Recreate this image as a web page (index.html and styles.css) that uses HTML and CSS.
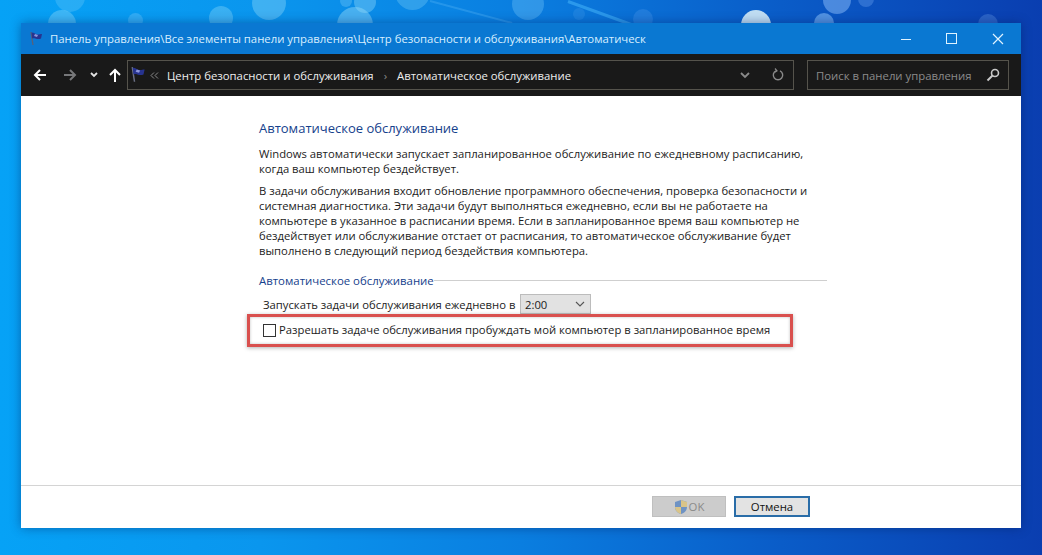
FILE: index.html
```html
<!DOCTYPE html>
<html lang="ru">
<head>
<meta charset="utf-8">
<title>Автоматическое обслуживание</title>
<link rel="stylesheet" href="styles.css">
</head>
<body>
<div class="desktop">
  <span class="bokeh b1"></span><span class="bokeh b2"></span><span class="bokeh b3"></span><span class="bokeh b4"></span><span class="bokeh b5"></span><span class="bokeh b6"></span><span class="bokeh b7"></span><span class="bokeh b8"></span><span class="bokeh b9"></span><span class="bokeh b10"></span><span class="bokeh b11"></span><span class="bokeh b12"></span><span class="bokeh b13"></span><span class="bokeh b14"></span><span class="bokeh b15"></span><span class="bokeh b16"></span><span class="bokeh b17"></span>
  <span class="streak s1"></span><span class="streak s2"></span>
  <main class="window">
    <header class="titlebar">
      <svg class="flag-small" width="16" height="16" viewBox="0 0 16 16"><path d="M2 1l2 13" stroke="#5a6078" stroke-width="1.300"/><path d="M2.500 1.500c3 0 4 2 6 2s3-.5 4.500-.5l-1 4.500c-2 1-4 .5-5.500 0s-2.500-.5-3.500 0z" fill="#27338f"/><path d="M6 3l3 1-1 2-3-1z" fill="#8d96dc"/></svg>
      <span class="title-text">Панель управления\Все элементы панели управления\Центр безопасности и обслуживания\Автоматическ</span>
      <div class="winctrls">
        <svg width="12" height="12" viewBox="0 0 12 12"><path d="M1 6.500h10" stroke="#dff3ff" stroke-width="1"/></svg>
        <svg width="12" height="12" viewBox="0 0 12 12"><rect x=".5" y=".5" width="10" height="10" fill="none" stroke="#dff3ff"/></svg>
        <svg width="12" height="12" viewBox="0 0 12 12"><path d="M1 1l10 10M11 1L1 11" stroke="#dff3ff" stroke-width="1.200"/></svg>
      </div>
    </header>
    <nav class="toolbar">
      <svg class="nav back" width="14" height="14" viewBox="0 0 14 14"><path d="M13 7H2M7 2L2 7l5 5" fill="none" stroke="#fff" stroke-width="2"/></svg>
      <svg class="nav fwd" width="14" height="14" viewBox="0 0 14 14"><path d="M1 7h11M7 2l5 5-5 5" fill="none" stroke="#77787a" stroke-width="2"/></svg>
      <svg class="nav down" width="8" height="6" viewBox="0 0 8 6"><path d="M1 1l3 3 3-3" fill="none" stroke="#e4e4e4" stroke-width="1.800"/></svg>
      <svg class="nav up" width="14" height="14" viewBox="0 0 14 14"><path d="M7 14V2M2 7l5-5 5 5" fill="none" stroke="#fff" stroke-width="2"/></svg>
      <div class="address">
        <svg class="flag-big" width="18" height="18" viewBox="0 0 16 16"><path d="M2 1l2 13" stroke="#6b7085" stroke-width="1.300"/><path d="M2.500 1.500c3 0 4 2 6 2s3-.5 4.500-.5l-1 4.500c-2 1-4 .5-5.500 0s-2.500-.5-3.500 0z" fill="#27338f"/><path d="M6 3l3 1-1 2-3-1z" fill="#8d96dc"/></svg>
        <svg class="chev" width="9" height="7" viewBox="0 0 9 7"><path d="M4 .5L1 3.500l3 3M8 .5L5 3.500l3 3" fill="none" stroke="#8a8a8a" stroke-width="1"/></svg>
        <span class="crumb">Центр безопасности и обслуживания</span>
        <span class="sep">›</span>
        <span class="crumb">Автоматическое обслуживание</span>
        <svg class="addr-drop" width="10" height="7" viewBox="0 0 10 7"><path d="M1 1l4 4 4-4" fill="none" stroke="#8a8a8a" stroke-width="1.800"/></svg>
        <svg class="refresh" width="12" height="14" viewBox="0 0 12 14"><path d="M4 2.800a4.700 4.700 0 1 0 4 0" fill="none" stroke="#8a8a8a" stroke-width="1.400"/><path d="M3 .5l2 2.300-2.300 1.500" fill="none" stroke="#8a8a8a" stroke-width="1.200"/></svg>
      </div>
      <div class="search">
        <span class="search-text">Поиск в панели управления</span>
        <svg width="14" height="14" viewBox="0 0 14 14"><circle cx="9" cy="5" r="3.500" fill="none" stroke="#c9c9c9" stroke-width="1.600"/><path d="M6.500 7.500L1.500 12.500" stroke="#c9c9c9" stroke-width="2"/></svg>
      </div>
    </nav>
    <section class="content">
      <h1 class="heading">Автоматическое обслуживание</h1>
      <p class="para p1">Windows автоматически запускает запланированное обслуживание по ежедневному расписанию,<br>когда ваш компьютер бездействует.</p>
      <p class="para p2">В задачи обслуживания входит обновление программного обеспечения, проверка безопасности и<br>системная диагностика. Эти задачи будут выполняться ежедневно, если вы не работаете на<br>компьютере в указанное в расписании время. Если в запланированное время ваш компьютер не<br>бездействует или обслуживание отстает от расписания, то автоматическое обслуживание будет<br>выполнено в следующий период бездействия компьютера.</p>
      <div class="group-head"><span class="group-title">Автоматическое обслуживание</span><span class="group-line"></span></div>
      <div class="time-row"><span class="time-label">Запускать задачи обслуживания ежедневно в</span>
        <div class="select"><span>2:00</span><svg width="10" height="6" viewBox="0 0 10 6"><path d="M1 1l4 4 4-4" fill="none" stroke="#555" stroke-width="1.100"/></svg></div>
      </div>
      <div class="check-row"><span class="checkbox"></span><span class="check-label">Разрешать задаче обслуживания пробуждать мой компьютер в запланированное время</span></div>
    </section>
    <footer class="footer">
      <button class="btn ok" disabled>
        <svg width="14" height="16" viewBox="0 0 14 16"><path d="M7 1l6 2v5c0 4-3 6-6 7-3-1-6-3-6-7V3z" fill="#6f93c4"/><path d="M7 1l6 2v5H7zM7 8H1c0 4 3 6 6 7z" fill="#d9c489"/></svg>
        <span>OK</span>
      </button>
      <button class="btn cancel">Отмена</button>
    </footer>
  </main>
</div>
</body>
</html>
```
FILE: styles.css
```css
* { box-sizing: border-box; }
html, body { margin: 0; padding: 0; }
body { font-family: "Open Sans", "Noto Sans", sans-serif; }
.desktop {
  position: relative;
  width: 1042px;
  height: 555px;
  padding: 23px 21px 27px;
  overflow: hidden;
  background: linear-gradient(90deg, #06a2f6 0%, #0a96ee 25%, #0a7ee0 50%, #0a5cc8 75%, #0a3eb0 100%);
}
.bokeh { position: absolute; border-radius: 50%; background: rgba(150, 215, 255, .3); filter: blur(.6px); }
.streak { position: absolute; height: 2px; background: rgba(70, 180, 250, .55); transform-origin: left center; }
.s1 { left: 430px; top: 0; width: 85px; transform: rotate(15deg); background: rgba(100, 190, 250, .3); }
.s2 { left: 568px; top: 0; width: 68px; height: 3px; transform: rotate(20deg); }
.b1 { left: 55px; top: -18px; width: 30px; height: 30px; background: rgba(120, 205, 250, .3); }
.b2 { left: 48px; top: 10px; width: 28px; height: 28px; background: rgba(150, 220, 250, .38); }
.b3 { left: 128px; top: 13px; width: 15px; height: 15px; background: rgba(150, 215, 255, .28); }
.b4 { left: 209px; top: 6px; width: 24px; height: 24px; background: rgba(150, 220, 250, .35); }
.b5 { left: 252px; top: -14px; width: 34px; height: 34px; background: rgba(150, 220, 250, .38); }
.b6 { left: 337px; top: 7px; width: 36px; height: 36px; background: rgba(160, 225, 250, .42); }
.b7 { left: 340px; top: -5px; width: 12px; height: 12px; background: rgba(150, 220, 250, .28); }
.b8 { left: 354px; top: -9px; width: 22px; height: 22px; background: rgba(150, 220, 250, .38); }
.b9 { left: 395px; top: -25px; width: 35px; height: 35px; background: rgba(140, 215, 250, .3); }
.b10 { left: 512px; top: -12px; width: 32px; height: 32px; background: rgba(120, 200, 250, .35); }
.b11 { left: 573px; top: 8px; width: 12px; height: 12px; background: rgba(120, 190, 250, .15); }
.b12 { left: 633px; top: 9px; width: 20px; height: 20px; background: rgba(120, 180, 250, .2); }
.b13 { left: 741px; top: 10px; width: 30px; height: 30px; background: rgba(225, 245, 250, .85); }
.b14 { left: 823px; top: -14px; width: 28px; height: 28px; background: rgba(140, 190, 250, .5); }
.b15 { left: 858px; top: -9px; width: 16px; height: 16px; background: rgba(130, 180, 250, .3); }
.b16 { left: 814px; top: 13px; width: 20px; height: 20px; background: rgba(140, 195, 250, .55); }
.b17 { left: 978px; top: 14px; width: 20px; height: 20px; background: rgba(120, 170, 240, .3); }
.window {
  position: relative;
  display: flex;
  flex-direction: column;
  width: 1000px;
  height: 505px;
  background: #fff;
  box-shadow: 0 0 10px rgba(0, 30, 90, .45);
}
.titlebar {
  display: flex;
  align-items: center;
  height: 31px;
  padding-left: 8px;
  background: #0a78d2;
  color: #d8efff;
  font-size: 11.350px;
  flex: none;
}
.flag-small { margin-right: 5px; }
.title-text { flex: 1; }
.winctrls { display: flex; align-items: center; gap: 34px; padding-right: 17px; }
.toolbar {
  display: flex;
  align-items: center;
  flex: none;
  height: 42px;
  padding-left: 12px;
  background: #191919;
}
.nav { flex: none; }
.fwd { margin-left: 16px; }
.down { margin-left: 13px; }
.up { margin-left: 10px; }
.address {
  display: flex;
  align-items: center;
  width: 667px;
  height: 30px;
  margin-left: 5px;
  padding: 0 9px 0 2px;
  border: 1px solid #55534c;
  color: #eee;
  font-size: 11.350px;
}
.flag-big { flex: none; }
.chev { flex: none; margin: 0 8px 0 2px; }
.sep { margin: 0 10px; color: #8a8a8a; }
.addr-drop { margin-left: auto; margin-right: 22px; }
.search {
  display: flex;
  align-items: center;
  justify-content: space-between;
  width: 202px;
  height: 30px;
  margin-left: 13px;
  padding: 0 8px;
  border: 1px solid #55534c;
  color: #8b8b8b;
  font-size: 11.350px;
}
.search-text { white-space: nowrap; }
.content {
  flex: 1;
  display: flex;
  flex-direction: column;
  padding: 22px 0 0 238px;
  color: #1c1c1c;
  font-size: 11.280px;
}
.heading { margin: 0 0 7px; color: #15418c; font-size: 13px; font-weight: 400; line-height: 21px; }
.para { margin: 0; width: 570px; line-height: 15px; white-space: nowrap; }
.p1 { margin-bottom: 7px; }
.p2 { margin-bottom: 14px; }
.group-head { display: flex; align-items: center; width: 568px; height: 16px; }
.group-title { color: #15418c; font-size: 11.400px; }
.group-line { flex: 1; height: 1px; background: #cfcfcf; }
.time-row { display: flex; align-items: center; height: 20px; margin: 6px 0 0 4px; }
.time-label { width: 257px; white-space: nowrap; }
.select {
  display: flex;
  align-items: center;
  justify-content: space-between;
  width: 71px;
  height: 20px;
  padding: 0 5px 0 4px;
  background: #e2e2e2;
  border: 1px solid #bcbcbc;
}
.check-row {
  display: flex;
  align-items: center;
  width: 546px;
  height: 33px;
  margin: 0 0 0 -12px;
  padding-left: 13px;
  border: 3px solid #d9504e;
  box-shadow: 0 1px 4px rgba(0, 0, 0, .3), inset 0 0 3px rgba(0, 0, 0, .25);
}
.check-label { white-space: nowrap; margin-bottom: 2px; }
.checkbox { width: 13px; height: 13px; margin-right: 3px; border: 1px solid #333; background: #fff; flex: none; }
.footer {
  display: flex;
  justify-content: flex-end;
  gap: 8px;
  flex: none;
  height: 43px;
  padding: 10px 211px 0 0;
  border-top: 1px solid #d4d4d4;
}
.btn {
  display: flex;
  align-items: center;
  justify-content: center;
  width: 74px;
  height: 21px;
  padding: 0;
  font-family: inherit;
  font-size: 11.350px;
}
.ok { gap: 1px; background: #cccccc; border: 1px solid #bfbfbf; color: #8a8a8a; }
.cancel { width: 76px; background: #e3e3e3; border: 2px solid #2a6da8; color: #111; }
```
